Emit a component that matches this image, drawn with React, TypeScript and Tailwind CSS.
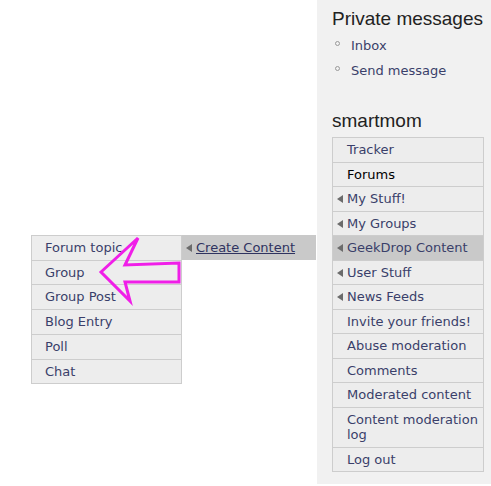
import React from "react";

const menu: { label: string; arrow?: boolean; active?: boolean; hover?: boolean }[] = [
  { label: "Tracker" },
  { label: "Forums", active: true },
  { label: "My Stuff!", arrow: true },
  { label: "My Groups", arrow: true },
  { label: "GeekDrop Content", arrow: true, hover: true },
  { label: "User Stuff", arrow: true },
  { label: "News Feeds", arrow: true },
  { label: "Invite your friends!" },
  { label: "Abuse moderation" },
  { label: "Comments" },
  { label: "Moderated content" },
  { label: "Content moderation log" },
  { label: "Log out" },
];

const createItems = ["Forum topic", "Group", "Group Post", "Blog Entry", "Poll", "Chat"];

function LeftArrow() {
  return (
    <svg width="6" height="8" viewBox="0 0 6 8" className="shrink-0">
      <path d="M6 0 L0 4 L6 8 Z" fill="#6b6b6b" />
    </svg>
  );
}

export default function App() {
  return (
    <div
      className="relative w-[491px] h-[486px] bg-white flex justify-end text-[13px]"
      style={{ fontFamily: '"DejaVu Sans", Verdana, sans-serif' }}
    >
      {/* ── Sidebar ─────────────────────────────── */}
      <aside className="w-[174px] h-[484px] bg-[#f1f1f1] pl-[15px] pr-[7px] pt-[8px]">
        <h2 className="text-[19px] leading-[22px] text-[#222] font-['Liberation_Sans',Arial,sans-serif]">
          Private messages
        </h2>
        <ul className="mt-[3px] text-[#3a3f6a]">
          {["Inbox", "Send message"].map((t) => (
            <li key={t} className="flex items-start h-[25px] leading-[25px]">
              <span className="mt-[8px] ml-[3px] mr-[11px] w-[5px] h-[5px] rounded-full border border-[#9a9a9a]" />
              {t}
            </li>
          ))}
        </ul>
        <h2 className="mt-[27px] text-[19px] leading-[22px] text-[#222] font-['Liberation_Sans',Arial,sans-serif]">
          smartmom
        </h2>
        <ul className="mt-[5px] border-x border-b border-[#cdcdcd]">
          {menu.map((m) => (
            <li
              key={m.label}
              className={
                "flex items-start border-t border-[#cdcdcd] py-[4px] leading-[15.5px] " +
                (m.hover ? "bg-[#c9c9c9] " : "bg-[#ededed] ") +
                (m.arrow ? "pl-[4px] " : "pl-[14px] ") +
                (m.active ? "text-black" : "text-[#3a3f6a]")
              }
            >
              {m.arrow && (
                <span className="mt-[4px] mr-[4px]">
                  <LeftArrow />
                </span>
              )}
              <span>{m.label}</span>
            </li>
          ))}
        </ul>
      </aside>

      {/* ── Flyout: Create Content ─────────────────────────────── */}
      <div className="absolute left-[182px] top-[235px] w-[134px] h-[25px] bg-[#c9c9c9] flex items-center pl-[4px] text-[#2f3360]">
        <span className="mr-[4px]">
          <LeftArrow />
        </span>
        <span className="underline">Create Content</span>
      </div>

      {/* ── Flyout: content types ─────────────────────────────── */}
      <ul className="absolute left-[31px] top-[235px] w-[151px] border-x border-b border-[#cdcdcd] text-[#3a3f6a]">
        {createItems.map((t) => (
          <li key={t} className="border-t border-[#cdcdcd] bg-[#ededed] pl-[13px] py-[4px] leading-[15.7px]">
            {t}
          </li>
        ))}
      </ul>

      {/* ── Annotation arrow ─────────────────────────────── */}
      <svg className="absolute left-0 top-0 pointer-events-none" width="491" height="486">
        <polygon
          points="101,272 138,238 125,265 179,263 179,282 125,282 130,301"
          fill="none"
          stroke="#f01ee8"
          strokeWidth="3"
          strokeLinejoin="miter"
        />
      </svg>
    </div>
  );
}
